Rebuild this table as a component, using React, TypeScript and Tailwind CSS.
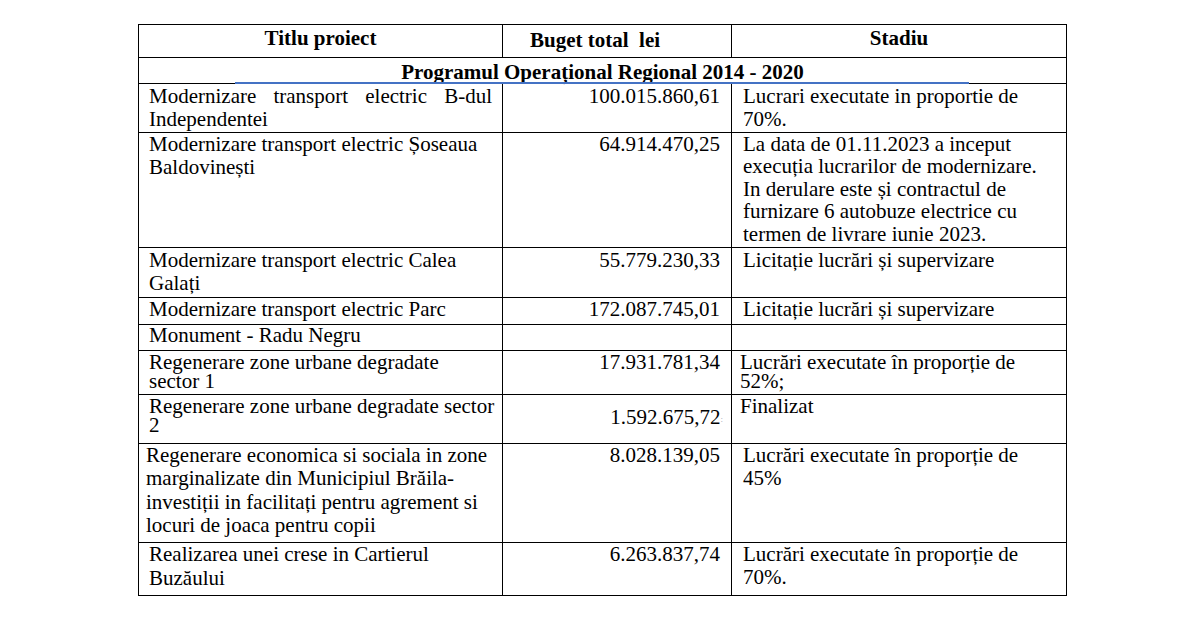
import React from "react";

const C1 = "border-r border-black pl-[10px] whitespace-nowrap";
const C2 = "border-r border-black pr-[11px] text-right whitespace-nowrap";
const C3 = "border-r border-black pl-[11px] whitespace-nowrap";
const ROW = "grid grid-cols-[364px_229px_335px] border-b border-black";

function Lines({ lines }: { lines: string[] }) {
  return (
    <>
      {lines.map((l, i) => (
        <div key={i}>{l}</div>
      ))}
    </>
  );
}

export default function App() {
  return (
    <div className="min-h-screen bg-white text-black [font-family:'Liberation_Serif','Times_New_Roman',serif] text-[21px] leading-[23px]">
      <div className="pt-[24px] pl-[138px]">
        <div className="w-[929px] border-t border-l border-black">
          {/* Header */}
          <div className={`${ROW} h-[33px] font-bold`}>
            <div className="border-r border-black text-center pt-[2px]">Titlu proiect</div>
            <div className="border-r border-black pl-[27px] pt-[4px] whitespace-pre">Buget total  lei</div>
            <div className="border-r border-black text-center pt-[2px]">Stadiu</div>
          </div>

          {/* Program row */}
          <div className="relative h-[26px] border-b border-r border-black font-bold text-center pt-[3px]">
            Programul Operațional Regional 2014 - 2020
            <div className="absolute left-[96px] bottom-[-1px] h-[2px] w-[734px] bg-[#4472c4]" />
          </div>

          {/* Row 1 */}
          <div className={`${ROW} h-[49px]`}>
            <div className={`${C1} pt-[1px] pr-[10px]`}>
              <div className="text-justify [text-align-last:justify]">Modernizare transport electric B-dul</div>
              <div>Independentei</div>
            </div>
            <div className={`${C2} pt-[1px]`}>100.015.860,61</div>
            <div className={`${C3} pt-[1px]`}>
              <Lines lines={["Lucrari executate in proportie de", "70%."]} />
            </div>
          </div>

          {/* Row 2 */}
          <div className={`${ROW} h-[115px]`}>
            <div className={`${C1} leading-[23.3px]`}>
              <Lines lines={["Modernizare transport electric Șoseaua", "Baldovinești"]} />
            </div>
            <div className={C2}>64.914.470,25</div>
            <div className={`${C3} leading-[22.4px]`}>
              <Lines
                lines={[
                  "La data de 01.11.2023 a inceput",
                  "execuția lucrarilor de modernizare.",
                  "In derulare este și contractul de",
                  "furnizare 6 autobuze electrice cu",
                  "termen de livrare iunie 2023.",
                ]}
              />
            </div>
          </div>

          {/* Row 3 */}
          <div className={`${ROW} h-[50px]`}>
            <div className={`${C1} pt-[1px] leading-[22.7px]`}>
              <Lines lines={["Modernizare transport electric Calea", "Galați"]} />
            </div>
            <div className={`${C2} pt-[1px]`}>55.779.230,33</div>
            <div className={`${C3} pt-[1px]`}>Licitație lucrări și supervizare</div>
          </div>

          {/* Row 4 */}
          <div className={`${ROW} h-[27px]`}>
            <div className={C1}>Modernizare transport electric Parc</div>
            <div className={C2}>172.087.745,01</div>
            <div className={C3}>Licitație lucrări și supervizare</div>
          </div>

          {/* Row 5 */}
          <div className={`${ROW} h-[26px]`}>
            <div className={`${C1} -mt-[1px]`}>Monument - Radu Negru</div>
            <div className={C2}></div>
            <div className={C3}></div>
          </div>

          {/* Row 6 */}
          <div className={`${ROW} h-[44px]`}>
            <div className={`${C1} pt-[2px] leading-[18.5px]`}>
              <Lines lines={["Regenerare zone urbane degradate", "sector 1"]} />
            </div>
            <div className={`${C2} pt-[2px] leading-[18.5px]`}>17.931.781,34</div>
            <div className="border-r border-black pl-[8px] whitespace-nowrap pt-[2px] leading-[18.5px]">
              <Lines lines={["Lucrări executate în proporție de", "52%;"]} />
            </div>
          </div>

          {/* Row 7 */}
          <div className={`${ROW} h-[49px]`}>
            <div className={`${C1} pt-[2px] leading-[18.5px]`}>
              <Lines lines={["Regenerare zone urbane degradate sector", "2"]} />
            </div>
            <div className="border-r border-black pr-[8px] text-right whitespace-nowrap pt-[11px]">
              1.592.675,72<span className="text-[9px] text-gray-400 align-middle">:</span>
            </div>
            <div className="border-r border-black pl-[8px] whitespace-nowrap pt-[2px] leading-[18.5px]">Finalizat</div>
          </div>

          {/* Row 8 */}
          <div className={`${ROW} h-[99px]`}>
            <div className="border-r border-black pl-[7px] whitespace-nowrap leading-[23.3px]">
              <Lines
                lines={[
                  "Regenerare economica si sociala in zone",
                  "marginalizate din Municipiul Brăila-",
                  "investiții in facilitați pentru agrement si",
                  "locuri de joaca pentru copii",
                ]}
              />
            </div>
            <div className={C2}>8.028.139,05</div>
            <div className={C3}>
              <Lines lines={["Lucrări executate în proporție de", "45%"]} />
            </div>
          </div>

          {/* Row 9 */}
          <div className={`${ROW} h-[53px]`}>
            <div className={`${C1} leading-[23.5px]`}>
              <Lines lines={["Realizarea unei crese in Cartierul", "Buzăului"]} />
            </div>
            <div className={C2}>6.263.837,74</div>
            <div className={C3}>
              <Lines lines={["Lucrări executate în proporție de", "70%."]} />
            </div>
          </div>
        </div>
      </div>
    </div>
  );
}
